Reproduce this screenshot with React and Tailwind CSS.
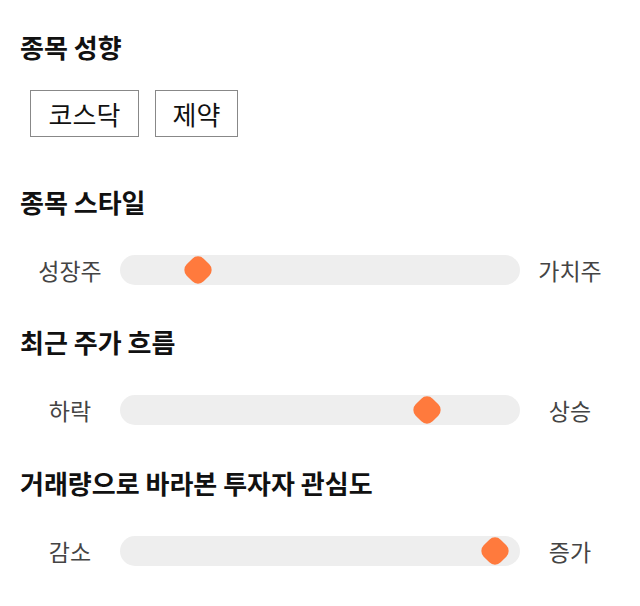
const FONT = { fontFamily: '"Noto Sans CJK KR", "Noto Sans", sans-serif' };

function Heading({ children, className = "" }) {
  return (
    <div className={"h-[30px] leading-[30px] text-[26px] font-bold text-[#111] " + className}>
      {children}
    </div>
  );
}

function Slider({ left, right, pos, className = "" }) {
  return (
    <div className={"flex items-center h-[30px] " + className}>
      <div className="w-[100px] text-center text-[23px] text-[#444] leading-[30px]">{left}</div>
      <div className="relative flex-1 h-[30px] rounded-full bg-[#eeeeee]">
        <div
          className="absolute top-[15px] w-[24px] h-[24px] rounded-[8px] bg-[#ff7a3d] -translate-x-1/2 -translate-y-1/2 rotate-45"
          style={{ left: pos + "px" }}
        />
      </div>
      <div className="w-[100px] text-center text-[23px] text-[#444] leading-[30px]">{right}</div>
    </div>
  );
}

export default function App() {
  return (
    <div className="w-[640px] h-[606px] bg-white px-[20px] pt-[32px]" style={FONT}>
      <Heading>종목 성향</Heading>
      <div className="flex gap-[16px] pl-[10px] mt-[28px]">
        <div className="h-[47px] w-[109px] border border-[#888] flex items-center justify-center text-[26px] text-[#111]">
          코스닥
        </div>
        <div className="h-[47px] w-[83px] border border-[#888] flex items-center justify-center text-[26px] text-[#111]">
          제약
        </div>
      </div>
      <Heading className="mt-[50px]">종목 스타일</Heading>
      <Slider className="mt-[38px]" left="성장주" right="가치주" pos={78} />
      <Heading className="mt-[42px]">최근 주가 흐름</Heading>
      <Slider className="mt-[38px]" left="하락" right="상승" pos={307} />
      <Heading className="mt-[43px]">거래량으로 바라본 투자자 관심도</Heading>
      <Slider className="mt-[38px]" left="감소" right="증가" pos={375} />
    </div>
  );
}
